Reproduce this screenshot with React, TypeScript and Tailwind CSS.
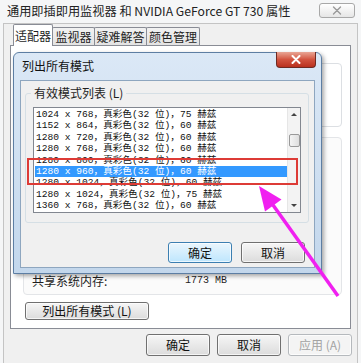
import React from 'react';

const modes: [string, string][] = [
  ['1024 x 768', '75'],
  ['1152 x 864', '60'],
  ['1280 x 720', '60'],
  ['1280 x 768', '60'],
  ['1280 x 800', '60'],
  ['1280 x 960', '60'],
  ['1280 x 1024', '60'],
  ['1280 x 1024', '75'],
  ['1360 x 768', '60'],
];

const ui = "font-['Segoe_UI','Noto_Sans_CJK_SC',sans-serif]";
const mono = "font-['Liberation_Mono','Noto_Sans_CJK_SC',monospace]";

type BtnProps = { label: string; kind?: 'normal' | 'default' | 'disabled'; className?: string };

const Btn: React.FC<BtnProps> = ({ label, kind = 'normal', className = '' }) => {
  const look =
    kind === 'default'
      ? 'border-[#3c7fb1] bg-gradient-to-b from-[#eaf6fd] to-[#bee6fd] text-[#111]'
      : kind === 'disabled'
      ? 'border-[#b5b9bd] bg-[#f4f4f4] text-[#a3a3a3]'
      : 'border-[#707070] bg-gradient-to-b from-[#f6f6f6] to-[#dcdcdc] text-[#111]';
  return (
    <div
      className={`flex items-center justify-center rounded-[3px] border text-[12px] leading-none shadow-[inset_0_0_0_1px_rgba(255,255,255,0.7)] ${look} ${className}`}
    >
      {label}
    </div>
  );
};

const XIcon: React.FC<{ color: string; width?: number }> = ({ color, width = 1.6 }) => (
  <svg width="10" height="9" viewBox="0 0 10 9">
    <path d="M1.5 1 L8.5 8 M8.5 1 L1.5 8" stroke={color} strokeWidth={width} strokeLinecap="round" />
  </svg>
);

export default function App() {
  return (
    <div className={`relative w-[361px] h-[363px] overflow-hidden bg-[#f5f6f7] flex flex-col ${ui} text-[#1e1e1e]`}>
      {/* window title */}
      <div className="h-[23px] flex items-start justify-between pl-[7px] pr-[6px]">
        <div className="pt-[3px] text-[12.2px] leading-[16px] text-[#222]">
          通用即插即用监视器 和 NVIDIA GeForce GT 730 属性
        </div>
        <div className="mt-[3px] w-[36px] h-[15px] rounded-[3px] border border-[#a8a8a8] bg-gradient-to-b from-white to-[#e6e6e6] flex items-center justify-center">
          <XIcon color="#9a9a9a" width={1.4} />
        </div>
      </div>

      {/* client area */}
      <div className="flex-1 mx-[3px] border border-b-0 border-[#c4c4c4] bg-[#f0f0f0] flex flex-col">
        {/* tabs */}
        <div className="h-[21px] pl-[9px] flex items-end">
          <div className="relative z-10 -mb-px h-[22px] w-[40px] border border-b-0 border-[#898c95] bg-white rounded-t-[2px] flex items-center justify-center text-[12px]">
            适配器
          </div>
          <div className="h-[18px] w-[43px] -ml-px border border-b-0 border-[#898c95] bg-gradient-to-b from-[#f2f2f2] to-[#e3e3e3] rounded-t-[2px] flex items-center justify-center text-[12px]">
            监视器
          </div>
          <div className="h-[18px] w-[53px] -ml-px border border-b-0 border-[#898c95] bg-gradient-to-b from-[#f2f2f2] to-[#e3e3e3] rounded-t-[2px] flex items-center justify-center text-[12px]">
            疑难解答
          </div>
          <div className="h-[18px] w-[54px] -ml-px border border-b-0 border-[#898c95] bg-gradient-to-b from-[#f2f2f2] to-[#e3e3e3] rounded-t-[2px] flex items-center justify-center text-[12px]">
            颜色管理
          </div>
        </div>

        {/* tab panel */}
        <div className="ml-[6px] w-[341px] h-[284px] border border-[#898c95] bg-white flex flex-col">
          <div className="mt-[17px] ml-[12px] w-[319px] h-[64px] rounded-[4px] border border-[#dcdfe3]" />
          <div className="mt-[10px] ml-[12px] w-[319px] h-[158px] rounded-[4px] border border-[#e3e5e8] bg-[#fbfbfb] flex flex-col justify-end pb-[5px] pl-[8px]">
            <div className="flex items-center text-[12px] leading-[16px]">
              <span className="w-[153px]">共享系统内存:</span>
              <span className={`${mono} text-[10px]`}>1773 MB</span>
            </div>
          </div>
          <Btn label="列出所有模式 (L)" className="mt-[7px] ml-[14px] w-[124px] h-[18px]" />
        </div>

        {/* bottom buttons */}
        <div className="mt-[5px] pr-[5px] flex justify-end gap-[7px]">
          <Btn label="确定" className="w-[64px] h-[22px]" />
          <Btn label="取消" className="w-[64px] h-[22px]" />
          <Btn label="应用 (A)" kind="disabled" className="w-[64px] h-[22px]" />
        </div>
      </div>

      {/* modal dialog */}
      <div className="absolute left-[13px] top-[52px] w-[309px] h-[222px] rounded-t-[6px] border border-[#5d7ea3] bg-gradient-to-b from-[#dbe8f6] to-[#c3d7ec] shadow-[2px_2px_4px_rgba(0,0,0,0.35)] flex flex-col">
        <div className="h-[27px] flex items-start justify-between pl-[8px] pr-[5px]">
          <div className="pt-[5px] text-[12px] leading-[16px] text-[#111]">列出所有模式</div>
          <div className="w-[40px] h-[16px] -mt-px rounded-b-[4px] border border-[#6e2a22] border-t-0 bg-gradient-to-b from-[#e8a595] via-[#d2533f] to-[#b9301e] flex items-center justify-center">
            <XIcon color="#ffffff" width={2} />
          </div>
        </div>
        <div className="mx-[6px] h-[188px] border border-[#8ea6bf] bg-[#f0f0f0] relative">
          {/* group box */}
          <div className="absolute left-[4px] top-[12px] w-[284px] h-[130px] rounded-[3px] border border-[#d5dfe5]" />
          <div className="absolute left-[10px] top-[4px] px-[3px] bg-[#f0f0f0] text-[12px] leading-[16px]">
            有效模式列表 (L)
          </div>
          {/* list box */}
          <div className="absolute left-[12px] top-[26px] w-[268px] h-[106px] border border-[#828790] bg-white flex">
            <div className={`flex-1 pl-[1px] pt-[1px] ${mono} text-[9.6px]`}>
              {modes.map(([res, hz], i) => (
                <div
                  key={i}
                  className={`h-[11.4px] leading-[11.4px] pl-[1px] whitespace-pre overflow-hidden ${
                    i === 5 ? 'bg-[#3399ff] text-white' : 'text-[#111]'
                  }`}
                >
                  {res}，真彩色(32 位)，{hz} 赫兹
                </div>
              ))}
            </div>
            <div className="w-[13px] border-l border-[#e6e6e6] bg-[#f3f3f3] flex flex-col items-center">
              <div className="h-[13px] flex items-center justify-center">
                <div className="w-0 h-0 border-l-[3px] border-r-[3px] border-b-[3px] border-l-transparent border-r-transparent border-b-[#444]" />
              </div>
              <div className="mt-[13px] w-[11px] h-[13px] rounded-[2px] border border-[#999] bg-gradient-to-r from-[#f4f4f4] to-[#dedede]" />
              <div className="flex-1" />
              <div className="h-[13px] flex items-center justify-center">
                <div className="w-0 h-0 border-l-[3px] border-r-[3px] border-t-[3px] border-l-transparent border-r-transparent border-t-[#444]" />
              </div>
            </div>
          </div>
          {/* dialog buttons */}
          <div className="absolute left-[147px] top-[161px] flex gap-[9px]">
            <Btn label="确定" kind="default" className="w-[64px] h-[21px]" />
            <Btn label="取消" className="w-[64px] h-[21px]" />
          </div>
        </div>
      </div>

      {/* annotation: red highlight box */}
      <div className="absolute left-[27px] top-[158px] w-[271px] h-[27px] border-2 border-[#dd3b36]" />

      {/* annotation: magenta arrow */}
      <svg className="absolute left-0 top-0 pointer-events-none" width="361" height="363" viewBox="0 0 361 363">
        <line x1="273" y1="205" x2="338" y2="296" stroke="#f020f0" strokeWidth="3.5" />
        <polygon points="259,186 265,211.5 281.5,199.5" fill="#f020f0" />
      </svg>
    </div>
  );
}
